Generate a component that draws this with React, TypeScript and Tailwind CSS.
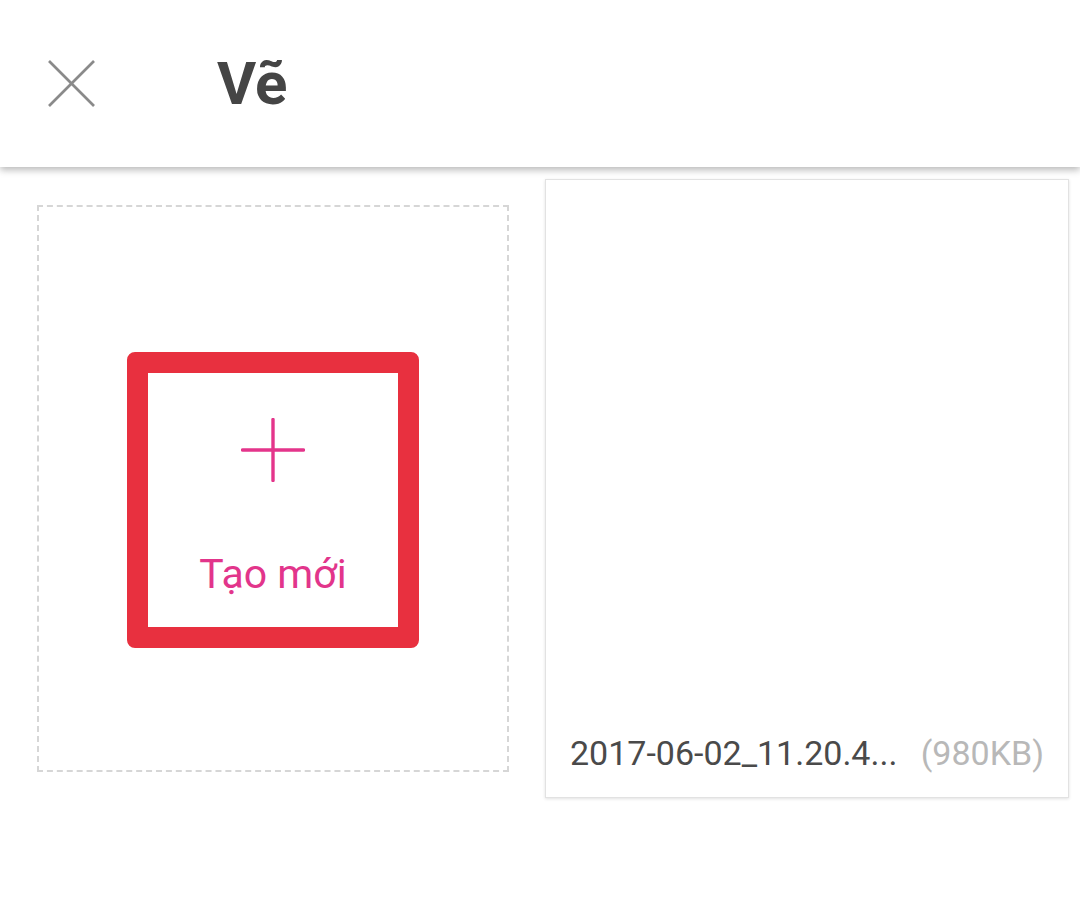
export default function App() {
  return (
    <div
      className="relative w-[1080px] h-[916px] bg-white overflow-hidden"
      style={{ fontFamily: "Roboto, 'Noto Sans', sans-serif" }}
    >
      {/* Header */}
      <header className="relative z-10 h-[167px] flex items-center bg-white shadow-[0_3px_7px_rgba(0,0,0,0.28)]">
        <button className="ml-[48px] w-[47px] h-[47px] flex items-center justify-center">
          <svg width="47" height="47" viewBox="0 0 47 47">
            <line x1="1" y1="1" x2="46" y2="46" stroke="#8a8a8a" strokeWidth="2.6" />
            <line x1="46" y1="1" x2="1" y2="46" stroke="#8a8a8a" strokeWidth="2.6" />
          </svg>
        </button>
        <h1 className="ml-[122px] text-[60px] leading-none font-bold text-[#454545]">Vẽ</h1>
      </header>

      {/* Content */}
      <div className="flex items-start pl-[37px]">
        {/* New drawing slot */}
        <div className="mt-[38px] w-[472px] h-[567px] border-2 border-dashed border-[#d6d6d6] flex justify-center pt-[145px]">
          <div className="w-[292px] h-[296px] border-[21px] border-[#e8303f] rounded-[8px] bg-white flex flex-col items-center">
            <svg className="mt-[45px]" width="64" height="64" viewBox="0 0 64 64">
              <line x1="32" y1="1.5" x2="32" y2="62.5" stroke="#e4358b" strokeWidth="3.4" strokeLinecap="round" />
              <line x1="1.5" y1="32" x2="62.5" y2="32" stroke="#e4358b" strokeWidth="3.4" strokeLinecap="round" />
            </svg>
            <span className="mt-[72px] text-[41px] leading-none text-[#e2358b]">Tạo mới</span>
          </div>
        </div>

        {/* Saved drawing */}
        <div className="ml-[36px] mt-[12px] w-[524px] h-[619px] bg-white border border-[#e2e2e2] shadow-[0_1px_3px_rgba(0,0,0,0.12)] flex flex-col justify-end px-[24px] pb-[27px]">
          <div className="flex items-baseline justify-between text-[34px] leading-none">
            <span className="text-[#4a4a4a]">2017-06-02_11.20.4...</span>
            <span className="text-[#b8b8b8]">(980KB)</span>
          </div>
        </div>
      </div>
    </div>
  );
}
